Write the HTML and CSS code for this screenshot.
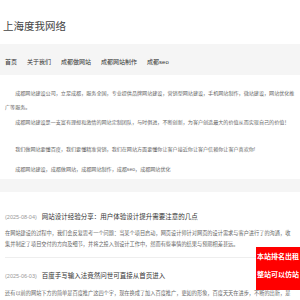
FILE: index.html
```html
<!DOCTYPE html>
<html>
<head>
	<meta http-equiv="Content-Type" content="text/html; charset=utf-8" />
	<title>上海度我网络</title>
	<link rel="stylesheet" href="styles.css">
</head>
<body>
	<div class="top">
		<h1 class="logo">上海度我网络</h1>
	</div>
	<ul class="nav">
		<li>首页</li>
		<li>关于我们</li>
		<li>成都做网站</li>
		<li>成都网站制作</li>
		<li>成都seo</li>
	</ul>
	<div class="intro">
		<p>成都网站建设公司，立足成都，服务全国，专业提供品牌网站建设，营销型网站建设，手机网站制作，微站建设，网站优化推广等服务。</p>
		<p>成都网站建设是一支富有理想和激情的网站定制团队，与时俱进，不断创新，为客户创造最大的价值从而实现自己的价值！</p>
		<p class="p3">我们做网站要懂百度，我们要懂精准营销，我们在网站方面要懂你让客户接近你让客户信赖你让客户喜欢你!</p>
		<p class="p4">成都网站建设，成都做网站，成都网站制作，成都seo，成都网站优化</p>
	</div>
	<div class="list">
		<div class="item">
			<h3><span class="date">(2025-08-04)</span>网站设计经验分享：用户体验设计提升需要注意的几点</h3>
			<p>在网站建设的过程中，我们会反复思考一个问题：当某个项目启动，网页设计师针对网页的设计需求与客户进行了的沟通，收集并制定了项目交付的方向及细节，并将之投入到设计工作中，然而有些事情的结果与预期相差甚远。</p>
		</div>
		<div class="item">
			<h3><span class="date">(2025-06-03)</span>百度手写输入法竟然问世可直接从首页进入</h3>
			<p>还有以前的网站下方的简单是百度推广这四个字，现在换成了加入百度推广，更如的形象，百度天天在进步，不断的出新，是</p>
		</div>
	</div>
	<!--右侧浮动广告-->
	<div class="float-ad">
		<p>本站排名出租</p>
		<p>整站可以仿站</p>
	</div>
</body>
</html>
```

FILE: styles.css
```css
*{margin: 0;padding: 0;}
ul,li{list-style: none;}
body{ background: #f5f5f5; font-family: "Liberation Sans", "Noto Sans CJK SC", sans-serif; color: #666; }
.top{ height: 44px; background: #fff; }
.logo{ padding-left: 3px; font-size: 10.5px; font-weight: normal; line-height: 52px; color: #444; }
.nav{ display: flex; gap: 10px; padding: 0 5px; height: 31px; line-height: 36px; font-size: 6px; color: #333; }
.intro{ padding: 10.75px 5px 2.75px; background: #fff; font-size: 5.08px; line-height: 14.5px; }
.intro p{ text-indent: 2em; }
.intro .p3{ margin-top: 12.5px; }
.intro .p4{ margin-top: 5.5px; }
.list{ margin-top: 13px; padding-top: 7px; background: #fff; }
.item{ margin: 0 5px; padding: 8.5px 0 8px; border-bottom: 1px solid #eee; }
.item:first-child{ padding-top: 8.7px; }
.item h3{ font-size: 6.5px; font-weight: normal; line-height: 18px; color: #333; margin-bottom: 2.75px; }
.item .date{ margin-right: 5px; font-size: 5.5px; color: #999; }
.item p{ font-size: 5.2px; line-height: 10.5px; }
.float-ad{ position: fixed; right: 0; top: 247px; width: 44px; height: 42px; padding-top: 1px; background: #f00; color: #fff; font-size: 7px; font-weight: bold; line-height: 17.5px; text-align: center; }
```
